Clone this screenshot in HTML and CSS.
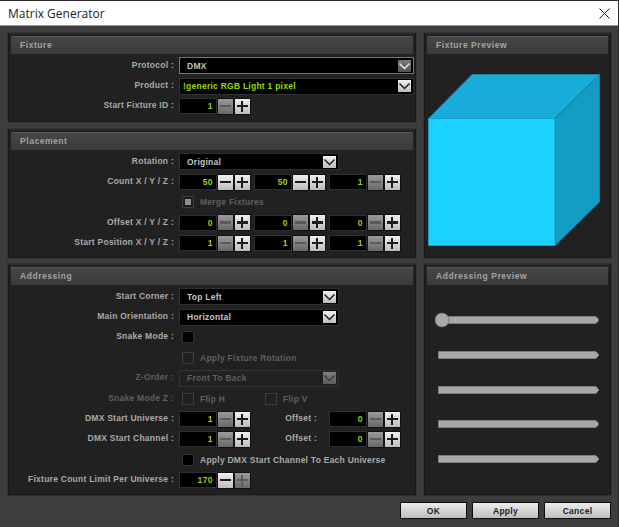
FILE: index.html
```html
<!DOCTYPE html>
<html lang="en">
<head>
<meta charset="utf-8">
<title>Matrix Generator</title>
<link rel="stylesheet" href="styles.css">
</head>
<body>
<div class="window">
  <header class="titlebar">
    <span class="title">Matrix Generator</span>
    <svg class="close" width="11" height="11" viewBox="0 0 11 11"><path d="M.5.5l10 10M10.500.5l-10 10" stroke="#222" stroke-width="1" fill="none"/></svg>
  </header>
  <main class="content">
    <div class="col-left">
      <section class="panel p-fixture">
        <h2 class="head">Fixture</h2>
        <div class="row"><span class="label">Protocol :</span>
          <div class="select focus wide"><span class="sel-text">DMX</span><span class="chev dim"><svg viewBox="0 0 13 11"><path d="M1.500 2.500l5 5 5-5" /></svg></span></div></div>
        <div class="row"><span class="label">Product :</span>
          <div class="select wide"><span class="sel-text green tight">!generic RGB Light 1 pixel</span><span class="chev"><svg viewBox="0 0 13 11"><path d="M1.500 2.500l5 5 5-5" /></svg></span></div></div>
        <div class="row"><span class="label">Start Fixture ID :</span>
          <div class="spin"><span class="num">1</span><span class="btn off minus"></span><span class="btn plus"></span></div></div>
      </section>
      <section class="panel p-placement">
        <h2 class="head">Placement</h2>
        <div class="row"><span class="label">Rotation :</span>
          <div class="select"><span class="sel-text">Original</span><span class="chev"><svg viewBox="0 0 13 11"><path d="M1.500 2.500l5 5 5-5" /></svg></span></div></div>
        <div class="row"><span class="label">Count X / Y / Z :</span>
          <div class="spin"><span class="num">50</span><span class="btn minus"></span><span class="btn plus"></span></div>
          <div class="spin"><span class="num">50</span><span class="btn minus"></span><span class="btn plus"></span></div>
          <div class="spin"><span class="num">1</span><span class="btn off minus"></span><span class="btn plus"></span></div></div>
        <div class="row"><span class="label"></span>
          <span class="check mixed"></span><span class="check-text dim-text">Merge Fixtures</span></div>
        <div class="row"><span class="label">Offset X / Y / Z :</span>
          <div class="spin"><span class="num">0</span><span class="btn off minus"></span><span class="btn plus"></span></div>
          <div class="spin"><span class="num">0</span><span class="btn off minus"></span><span class="btn plus"></span></div>
          <div class="spin"><span class="num">0</span><span class="btn off minus"></span><span class="btn plus"></span></div></div>
        <div class="row"><span class="label">Start Position X / Y / Z :</span>
          <div class="spin"><span class="num">1</span><span class="btn off minus"></span><span class="btn plus"></span></div>
          <div class="spin"><span class="num">1</span><span class="btn off minus"></span><span class="btn plus"></span></div>
          <div class="spin"><span class="num">1</span><span class="btn off minus"></span><span class="btn plus"></span></div></div>
      </section>
      <section class="panel p-addressing">
        <h2 class="head">Addressing</h2>
        <div class="row"><span class="label">Start Corner :</span>
          <div class="select"><span class="sel-text">Top Left</span><span class="chev"><svg viewBox="0 0 13 11"><path d="M1.500 2.500l5 5 5-5" /></svg></span></div></div>
        <div class="row"><span class="label">Main Orientation :</span>
          <div class="select"><span class="sel-text">Horizontal</span><span class="chev"><svg viewBox="0 0 13 11"><path d="M1.500 2.500l5 5 5-5" /></svg></span></div></div>
        <div class="row"><span class="label">Snake Mode :</span><span class="check"></span></div>
        <div class="row"><span class="label"></span><span class="check disabled"></span><span class="check-text dim-text">Apply Fixture Rotation</span></div>
        <div class="row"><span class="label dim-text">Z-Order :</span>
          <div class="select disabled-select"><span class="sel-text dim-text">Front To Back</span><span class="chev off-chev"><svg viewBox="0 0 13 11"><path d="M1.500 2.500l5 5 5-5" /></svg></span></div></div>
        <div class="row"><span class="label dim-text">Snake Mode Z :</span>
          <span class="check disabled"></span><span class="check-text dim-text flip">Flip H</span>
          <span class="check disabled"></span><span class="check-text dim-text">Flip V</span></div>
        <div class="row"><span class="label">DMX Start Universe :</span>
          <div class="spin"><span class="num">1</span><span class="btn off minus"></span><span class="btn plus"></span></div>
          <span class="label-mid">Offset :</span>
          <div class="spin"><span class="num">0</span><span class="btn off minus"></span><span class="btn plus"></span></div></div>
        <div class="row"><span class="label">DMX Start Channel :</span>
          <div class="spin"><span class="num">1</span><span class="btn off minus"></span><span class="btn plus"></span></div>
          <span class="label-mid">Offset :</span>
          <div class="spin"><span class="num">0</span><span class="btn off minus"></span><span class="btn plus"></span></div></div>
        <div class="row"><span class="label"></span><span class="check"></span><span class="check-text">Apply DMX Start Channel To Each Universe</span></div>
        <div class="row"><span class="label">Fixture Count Limit Per Universe :</span>
          <div class="spin"><span class="num">170</span><span class="btn minus"></span><span class="btn off plus"></span></div></div>
      </section>
    </div>
    <div class="col-right">
      <section class="panel p-fpreview">
        <h2 class="head">Fixture Preview</h2>
        <svg class="cube" width="172" height="172" viewBox="0 0 172 172">
          <path d="M.5 44.500L44 .5H171.500L127 44.500Z" fill="#17acd9" stroke="#1b7f9e"/>
          <path d="M127 44.500L171.500.5V128L127 171.500Z" fill="#139cc4" stroke="#1b7f9e"/>
          <path d="M.5 44.500H127V171.500H.5Z" fill="#1ad2ff" stroke="#1b9cc2"/>
        </svg>
      </section>
      <section class="panel p-apreview">
        <h2 class="head">Addressing Preview</h2>
        <div class="lanes">
          <svg class="lane" width="166" height="16" viewBox="0 0 166 16"><path d="M8 4.500H162L165 8L162 11.500H8Z" fill="#a8a8a8" stroke="#8a8a8a" stroke-width=".7"/><circle cx="8" cy="8" r="7" fill="#a8a8a8" stroke="#6d6d6d" stroke-width=".7"/></svg>
          <svg class="lane" width="166" height="16" viewBox="0 0 166 16"><path d="M4.500 4.500H162L165 8L162 11.500H4.500Z" fill="#a8a8a8" stroke="#8a8a8a" stroke-width=".7"/></svg>
          <svg class="lane" width="166" height="16" viewBox="0 0 166 16"><path d="M4.500 4.500H162L165 8L162 11.500H4.500Z" fill="#a8a8a8" stroke="#8a8a8a" stroke-width=".7"/></svg>
          <svg class="lane" width="166" height="16" viewBox="0 0 166 16"><path d="M4.500 4.500H162L165 8L162 11.500H4.500Z" fill="#a8a8a8" stroke="#8a8a8a" stroke-width=".7"/></svg>
          <svg class="lane" width="166" height="16" viewBox="0 0 166 16"><path d="M4.500 4.500H162L165 8L162 11.500H4.500Z" fill="#a8a8a8" stroke="#8a8a8a" stroke-width=".7"/></svg>
        </div>
      </section>
    </div>
  </main>
  <footer class="footer">
    <button class="action">OK</button>
    <button class="action">Apply</button>
    <button class="action">Cancel</button>
  </footer>
</div>
</body>
</html>
```
FILE: styles.css
```css
* { box-sizing: border-box; }
html, body { margin: 0; padding: 0; }
body {
  width: 619px;
  height: 527px;
  overflow: hidden;
  background: #2b2b2b;
  font-family: "Liberation Sans", sans-serif;
}
.window {
  width: 618px;
  height: 526px;
  margin-top: 1px;
  background: #3d3d3d;
  display: flex;
  flex-direction: column;
}
.titlebar {
  height: 25px;
  flex: none;
  background: #fff;
  border-bottom: 1px solid #9a9a9a;
  display: flex;
  align-items: center;
  justify-content: space-between;
  padding: 0 8px;
}
.title { font: 12px "Open Sans", sans-serif; color: #222; }
.content {
  display: flex;
  gap: 8px;
  padding: 7px 0 0 8px;
  height: 469px;
  flex: none;
}
.col-left { width: 408px; display: flex; flex-direction: column; gap: 6px; }
.col-right { width: 187px; display: flex; flex-direction: column; gap: 6px; }
.panel {
  background: #212121;
  border: 1px solid #191919;
  border-top-color: #2c2c2c;
  box-shadow: 0 0 0 1px #333;
}
.p-fixture { height: 89px; }
.p-placement { height: 129px; margin-top: 1px; }
.p-addressing { height: 231px; }
.p-fpreview { height: 225px; }
.p-apreview { height: 231px; }
.head {
  margin: 2px 2px 1.500px;
  height: 18px;
  padding: 0 0 0 9px;
  background: linear-gradient(#474747, #3a3a3a);
  border-top: 1px solid #555;
  font: bold 8.500px/16px "Liberation Sans", sans-serif;
  letter-spacing: .55px;
  color: #a2a2a2;
}
.row {
  display: flex;
  align-items: center;
  height: 20.400px;
}
.label {
  width: 165px;
  margin: 0 5px 2px 0;
  flex: none;
  text-align: right;
  font: bold 8.500px/12px "Liberation Sans", sans-serif;
  letter-spacing: .25px;
  color: #a9a9a9;
  white-space: nowrap;
}
.label-mid {
  width: 63px;
  margin: 0 12px 2px 0;
  flex: none;
  text-align: right;
  font: bold 8.500px/12px "Liberation Sans", sans-serif;
  letter-spacing: .25px;
  color: #a9a9a9;
}
.dim-text { color: #5f5f5f !important; }
.select {
  width: 160px;
  height: 17px;
  background: #000;
  border: 1px solid #2f2f2f;
  display: flex;
  align-items: center;
  justify-content: space-between;
  padding: 0 2px 0 7px;
}
.select.wide { width: 235px; }
.select.focus { border-color: #8c7a20; }
.disabled-select { background: #212121; border-color: #333; }
.sel-text {
  font: bold 8.500px/12px "Liberation Sans", sans-serif;
  letter-spacing: .25px;
  color: #c4c4c4;
}
.green { color: #96d800; }
.tight { margin-left: -4px; }
.chev {
  width: 13px;
  height: 12px;
  background: linear-gradient(#f0f0f0, #bdbdbd);
  display: flex;
}
.chev svg { width: 13px; height: 11px; fill: none; stroke: #222; stroke-width: 1.500; margin-top: 1px; }
.chev.dim { background: linear-gradient(#7a7a7a, #545454); }
.chev.dim svg { stroke: #e8e8e8; }
.off-chev { background: linear-gradient(#7f7f7f, #5c5c5c); }
.off-chev svg { stroke: #3d3d3d; }
.spin { display: flex; align-items: center; width: 75px; flex: none; }
.num {
  width: 38px;
  height: 16px;
  background: #000;
  border: 1px solid #2f2f2f;
  text-align: right;
  padding-right: 3px;
  font: bold 8.500px/15px "Liberation Sans", sans-serif;
  letter-spacing: .4px;
  color: #96d800;
  margin-right: 1px;
}
.btn {
  width: 15px;
  height: 15px;
  flex: none;
  margin-right: 1.500px;
  position: relative;
  background: linear-gradient(#f0f0f0, #bcbcbc);
  box-shadow: 0 0 0 1px #111;
}
.btn.off { background: linear-gradient(#9a9a9a, #686868); }
.btn::before, .plus::after {
  content: "";
  position: absolute;
  background: #1c1c1c;
}
.btn::before { left: 2px; right: 2px; top: 6px; height: 2.500px; }
.plus::after { top: 2px; bottom: 2px; left: 6px; width: 2.500px; }
.btn.off::before, .btn.off.plus::after { background: #5a5a5a; }
.check {
  width: 12px;
  height: 12px;
  flex: none;
  margin-left: 3px;
  background: #000;
  border: 1px solid #2f2f2f;
  position: relative;
}
.check.disabled { background: transparent; border-color: #3e3e3e; }
.check.mixed { background: #1c1c1c; border-color: #3f3f3f; }
.check.mixed::after {
  content: "";
  position: absolute;
  left: 2px; top: 2px; right: 2px; bottom: 2px;
  background: #8f8f8f;
}
.check-text {
  margin-left: 6px;
  font: bold 8.500px/12px "Liberation Sans", sans-serif;
  letter-spacing: .25px;
  color: #a9a9a9;
  white-space: nowrap;
}
.flip { width: 62px; flex: none; }
.cube { display: block; margin: 20px 0 0 3px; }
.lanes {
  display: flex;
  flex-direction: column;
  gap: 18.800px;
  margin: 27px 0 0 9px;
}
.lane { display: block; }
.footer {
  display: flex;
  justify-content: flex-end;
  gap: 5px;
  padding: 7px 7px 0 0;
}
.action {
  width: 67px;
  height: 17px;
  padding: 0;
  border: 1px solid #0f0f0f;
  outline: none;
  background: linear-gradient(#ececec, #bdbdbd);
  font: bold 8.500px/14px "Liberation Sans", sans-serif;
  letter-spacing: .3px;
  color: #222;
}
```
